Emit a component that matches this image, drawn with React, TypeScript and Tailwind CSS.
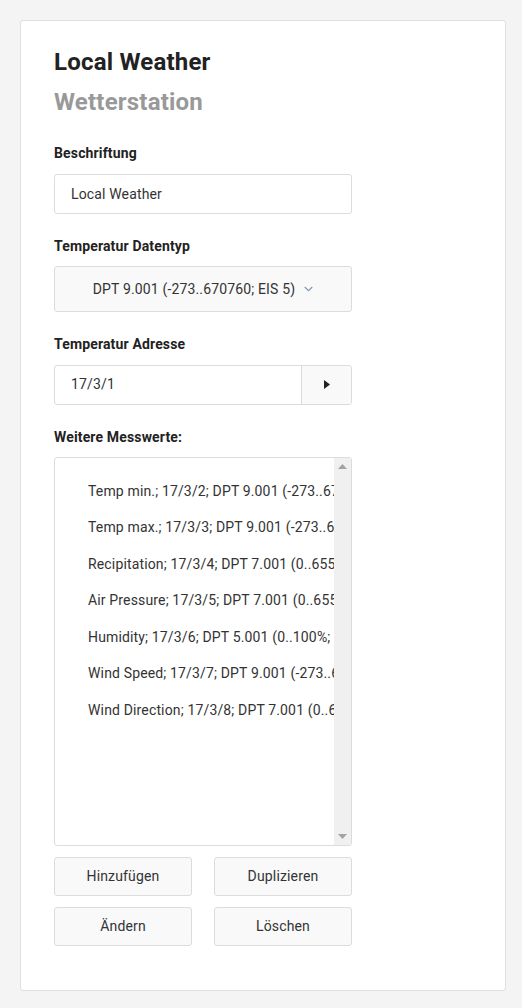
import React from "react";

const messwerte = [
  "Temp min.; 17/3/2; DPT 9.001 (-273..670760; EIS 5)",
  "Temp max.; 17/3/3; DPT 9.001 (-273..670760; EIS 5)",
  "Recipitation; 17/3/4; DPT 7.001 (0..65535)",
  "Air Pressure; 17/3/5; DPT 7.001 (0..65535)",
  "Humidity; 17/3/6; DPT 5.001 (0..100%; 8-bit)",
  "Wind Speed; 17/3/7; DPT 9.001 (-273..670760; EIS 5)",
  "Wind Direction; 17/3/8; DPT 7.001 (0..65535)",
];

const Label: React.FC<{ children: React.ReactNode }> = ({ children }) => (
  <label className="block text-[14px] leading-5 font-bold text-[#222] mb-[10.5px]">{children}</label>
);

const ActionButton: React.FC<{ children: React.ReactNode }> = ({ children }) => (
  <button className="h-[39px] rounded-[3px] border border-[#dcdcdc] bg-[#f9f9f9] text-[14px] text-[#333] hover:bg-[#f0f0f0]">
    {children}
  </button>
);

export default function App() {
  return (
    <div
      className="min-h-screen bg-[#f4f4f4] p-5 tracking-[0.15px]"
      style={{ fontFamily: "Roboto, 'Liberation Sans', sans-serif" }}
    >
      <div className="w-[486px] bg-white border border-[#e0e0e0] rounded-[3px] pl-[33px] pt-[22px] pb-[44px]">
        {/* Header */}
        <h1 className="text-[24px] leading-[39px] font-bold text-[#222] tracking-[0.2px]">Local Weather</h1>
        <h2 className="text-[24px] leading-[39px] font-bold text-[#999] tracking-[0.2px] mt-px">Wetterstation</h2>

        <div className="w-[298px] mt-[21px] flex flex-col">
          {/* Beschriftung */}
          <Label>Beschriftung</Label>
          <input
            defaultValue="Local Weather"
            className="h-[40px] w-full rounded-[3px] border border-[#dcdcdc] px-4 text-[14px] text-[#333] outline-none"
          />

          {/* Datentyp */}
          <div className="mt-[22px]">
            <Label>Temperatur Datentyp</Label>
            <button className="h-[46px] w-full rounded-[3px] border border-[#dcdcdc] bg-[#f9f9f9] flex items-center justify-center gap-[9px] text-[14px] text-[#333]">
              <span>DPT 9.001 (-273..670760; EIS 5)</span>
              <svg width="9" height="6" viewBox="0 0 9 6" fill="none">
                <path d="M0.75 1 L4.5 4.75 L8.25 1" stroke="#7f95b0" strokeWidth="1.1" />
              </svg>
            </button>
          </div>

          {/* Adresse */}
          <div className="mt-[22px]">
            <Label>Temperatur Adresse</Label>
            <div className="flex h-[40px] w-full rounded-[3px] border border-[#dcdcdc] overflow-hidden">
              <input
                defaultValue="17/3/1"
                className="flex-1 min-w-0 px-4 text-[14px] text-[#333] outline-none"
              />
              <button className="w-[50px] border-l border-[#dcdcdc] bg-[#f9f9f9] flex items-center justify-center">
                <svg width="6" height="9" viewBox="0 0 6 9">
                  <path d="M0 0 L6 4.5 L0 9 Z" fill="#222" />
                </svg>
              </button>
            </div>
          </div>

          {/* Weitere Messwerte */}
          <div className="mt-[22px]">
            <Label>Weitere Messwerte:</Label>
            <div className="flex h-[389px] w-full rounded-[3px] border border-[#dcdcdc] overflow-hidden">
              <ul className="flex-1 min-w-0 overflow-hidden pt-[15px] pl-[33px]">
                {messwerte.map((m) => (
                  <li key={m} className="h-[36.5px] flex items-center whitespace-nowrap text-[14px] text-[#333]">
                    {m}
                  </li>
                ))}
              </ul>
              {/* scrollbar */}
              <div className="w-[17px] bg-[#f0f0f0] flex flex-col items-center justify-between py-[6px]">
                <svg width="9" height="5" viewBox="0 0 9 5">
                  <path d="M0 5 L4.5 0 L9 5 Z" fill="#a3a3a3" />
                </svg>
                <svg width="9" height="5" viewBox="0 0 9 5">
                  <path d="M0 0 L4.5 5 L9 0 Z" fill="#a3a3a3" />
                </svg>
              </div>
            </div>
          </div>

          {/* Aktionen */}
          <div className="mt-[11px] grid grid-cols-2 gap-x-[22px] gap-y-[11px]">
            <ActionButton>Hinzufügen</ActionButton>
            <ActionButton>Duplizieren</ActionButton>
            <ActionButton>Ändern</ActionButton>
            <ActionButton>Löschen</ActionButton>
          </div>
        </div>
      </div>
    </div>
  );
}
